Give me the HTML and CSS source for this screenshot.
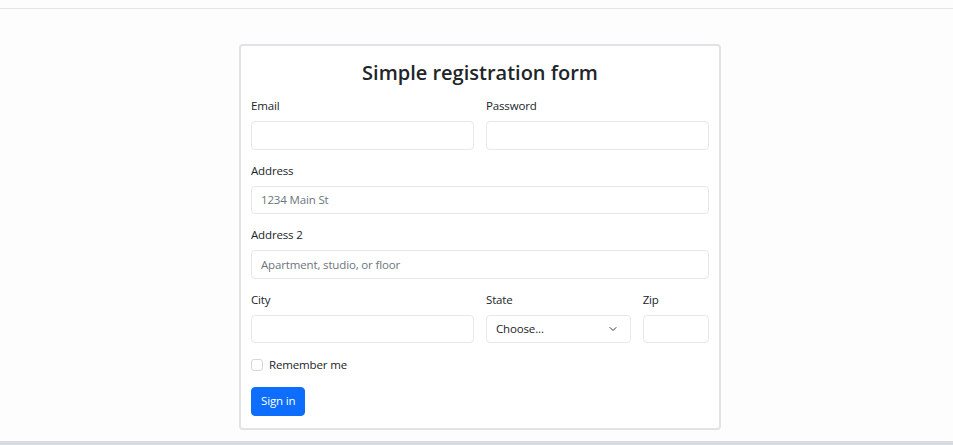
FILE: index.html
```html
<!DOCTYPE html>
<html lang="en">
<head>
<meta charset="utf-8">
<title>Simple registration form</title>
<link rel="stylesheet" href="styles.css">
</head>
<body>
<div class="topbar"></div>
<main class="page">
  <form class="card">
    <h3 class="title">Simple registration form</h3>
    <div class="grid">
      <div class="field span-6">
        <label class="label" for="email">Email</label>
        <input class="control" id="email" type="email">
      </div>
      <div class="field span-6">
        <label class="label" for="pw">Password</label>
        <input class="control" id="pw" type="password">
      </div>
      <div class="field span-12">
        <label class="label" for="addr">Address</label>
        <input class="control" id="addr" type="text" placeholder="1234 Main St">
      </div>
      <div class="field span-12">
        <label class="label" for="addr2">Address 2</label>
        <input class="control" id="addr2" type="text" placeholder="Apartment, studio, or floor">
      </div>
      <div class="field span-6">
        <label class="label" for="city">City</label>
        <input class="control" id="city" type="text">
      </div>
      <div class="field span-4">
        <label class="label" for="state">State</label>
        <div class="select">
          <span class="select-text">Choose...</span>
          <svg class="chev" width="10" height="8" viewBox="0 0 16 16"><path d="M2 5l6 6 6-6" fill="none" stroke="#343a40" stroke-width="2" stroke-linecap="round" stroke-linejoin="round"/></svg>
        </div>
      </div>
      <div class="field span-2">
        <label class="label" for="zip">Zip</label>
        <input class="control" id="zip" type="text">
      </div>
      <div class="check span-12">
        <span class="box"></span>
        <span class="check-label">Remember me</span>
      </div>
      <div class="span-12">
        <button class="btn" type="button">Sign in</button>
      </div>
    </div>
  </form>
</main>
<div class="bottombar"></div>
</body>
</html>
```

FILE: styles.css
```css
* { box-sizing: border-box; }
html, body { margin: 0; padding: 0; }
body {
  min-height: 100vh;
  display: flex;
  flex-direction: column;
  background: #fdfdfd;
  font-family: "Open Sans", "Noto Sans", sans-serif;
  font-size: 11.5px;
  letter-spacing: -0.15px;
  line-height: 18px;
  color: #212529;
}
.topbar {
  height: 9px;
  border-bottom: 1px solid #e6e6e6;
}
.page {
  display: flex;
  justify-content: center;
  padding: 35px 0 0 7px;
}
.card {
  width: 482px;
  background: #fff;
  border: 2px solid #e2e3e5;
  border-radius: 4px;
  padding: 15px 10px 12px;
}
.title {
  margin: 0 0 12px;
  text-align: center;
  font-size: 20px;
  font-weight: 600;
  letter-spacing: 0;
  line-height: 24px;
  color: #212529;
}
.grid {
  display: grid;
  grid-template-columns: repeat(12, 1fr);
  gap: 12px;
}
.span-12 { grid-column: span 12; }
.span-6 { grid-column: span 6; }
.span-4 { grid-column: span 4; }
.span-2 { grid-column: span 2; }
.field { display: flex; flex-direction: column; }
.label {
  margin-bottom: 6px;
  color: #212529;
}
.control, .select {
  height: 28.5px;
  width: 100%;
  padding: 4.5px 9px;
  font: inherit;
  letter-spacing: inherit;
  color: #212529;
  background: #fff;
  border: 1px solid #e6e8ea;
  border-radius: 4px;
  outline: none;
}
.control::placeholder { color: #6c757d; opacity: 1; }
.select {
  display: flex;
  align-items: center;
  justify-content: space-between;
  padding-right: 12px;
}
.chev { display: block; }
.check {
  display: flex;
  align-items: center;
  gap: 6px;
  min-height: 20px;
}
.box {
  width: 12px;
  height: 12px;
  border: 1px solid #d5d8db;
  border-radius: 3px;
  background: #fff;
}
.btn {
  display: inline-block;
  height: 28.5px;
  padding: 0 9px;
  font: inherit;
  letter-spacing: inherit;
  color: #fff;
  background: #0d6efd;
  border: 1px solid #0d6efd;
  border-radius: 4px;
}
.bottombar {
  margin-top: auto;
  height: 4px;
  background: #d6dcdf;
}
```
